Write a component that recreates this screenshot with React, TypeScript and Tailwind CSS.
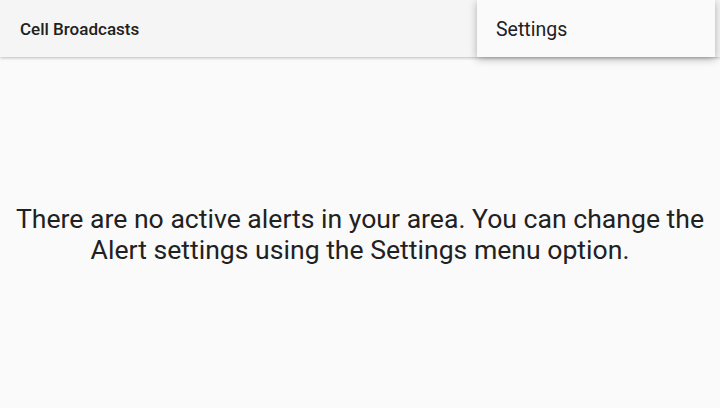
export default function App() {
  return (
    <div className="relative w-[720px] h-[408px] bg-[#fafafa] overflow-hidden" style={{ fontFamily: "Roboto, 'Noto Sans', sans-serif" }}>
      <div className="h-[57px] bg-[#f5f5f5] flex items-center pl-5 pt-[2px] shadow-[0_1px_3px_rgba(0,0,0,0.25)] relative z-10">
        <span className="text-[17px] font-medium text-[#212121]">Cell Broadcasts</span>
      </div>
      <div className="absolute top-0 left-[477px] w-[238px] h-[57px] bg-[#fafafa] z-20 flex items-center pl-[19px] pt-[2px] shadow-[0_2px_8px_rgba(0,0,0,0.3)]">
        <span className="text-[19.5px] text-[#212121]">Settings</span>
      </div>
      <div className="flex justify-center pt-[146px]">
        <p className="text-center text-[26.6px] leading-[31px] text-[#212121] whitespace-nowrap">
          There are no active alerts in your area. You can change the
          <br />
          Alert settings using the Settings menu option.
        </p>
      </div>
    </div>
  );
}
